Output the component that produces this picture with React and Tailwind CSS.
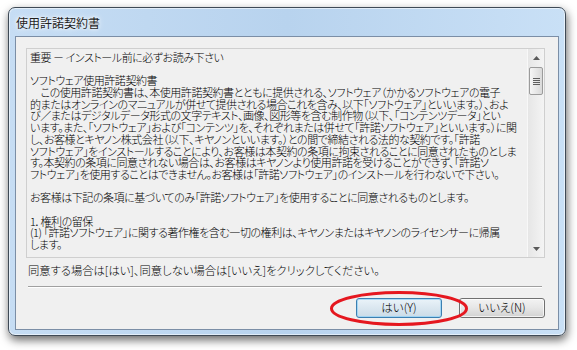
import React from "react";

const lines = [
  "重要 － インストール前に必ずお読み下さい",
  "",
  "ソフトウェア使用許諾契約書",
  "　この使用許諾契約書は、本使用許諾契約書とともに提供される、ソフトウェア（かかるソフトウェアの電子",
  "的またはオンラインのマニュアルが併せて提供される場合これを含み、以下「ソフトウェア」といいます。）、およ",
  "び／またはデジタルデータ形式の文字テキスト、画像、図形等を含む制作物（以下、「コンテンツデータ」とい",
  "います。また、「ソフトウェア」および「コンテンツ」を、それぞれまたは併せて「許諾ソフトウェア」といいます。）に関",
  "し、お客様とキヤノン株式会社（以下、キヤノンといいます。）との間で締結される法的な契約です。「許諾",
  "ソフトウェア」をインストールすることにより、お客様は本契約の条項に拘束されることに同意されたものとしま",
  "す。本契約の条項に同意されない場合は、お客様はキヤノンより使用許諾を受けることができず、「許諾ソ",
  "フトウェア」を使用することはできません。お客様は「許諾ソフトウェア」のインストールを行わないで下さい。",
  "",
  "お客様は下記の条項に基づいてのみ「許諾ソフトウェア」を使用することに同意されるものとします。",
  "",
  "1．権利の留保",
  "(1) 「許諾ソフトウェア」に関する著作権を含む一切の権利は、キヤノンまたはキヤノンのライセンサーに帰属",
  "します。",
];

function ScrollBar() {
  return (
    <div className="flex flex-col w-[17px] h-full bg-gradient-to-r from-[#e6e6e6] to-[#f4f4f4] border-l border-[#f8f8f8]">
      <div className="h-[17px] flex items-center justify-center">
        <svg width="7" height="4" viewBox="0 0 7 4">
          <path d="M3.5 0 L7 4 L0 4 Z" fill="#5a5a5a" />
        </svg>
      </div>
      <div className="mx-[1px] mt-[1px] h-[28px] rounded-[2px] border border-[#9b9b9b] bg-gradient-to-r from-[#f6f6f6] to-[#d9d9d9] flex flex-col items-center justify-center gap-[1px]">
        <div className="w-[7px] h-[1px] bg-[#5f5f5f]" />
        <div className="w-[7px] h-[1px] bg-[#5f5f5f]" />
        <div className="w-[7px] h-[1px] bg-[#5f5f5f]" />
        <div className="w-[7px] h-[1px] bg-[#5f5f5f]" />
      </div>
      <div className="flex-1" />
      <div className="h-[17px] flex items-center justify-center">
        <svg width="7" height="4" viewBox="0 0 7 4">
          <path d="M0 0 L7 0 L3.5 4 Z" fill="#5a5a5a" />
        </svg>
      </div>
    </div>
  );
}

export default function App() {
  return (
    <div className="relative w-[577px] h-[350px] bg-white overflow-hidden pt-[7px] pl-[8px] font-['Noto_Sans_CJK_JP',sans-serif] [font-feature-settings:'palt']">
      <div className="w-[558px] h-[329px] flex flex-col rounded-[7px] border border-[#3f4a56] bg-gradient-to-r from-[#c6ddf4] via-[#b8d3ee] to-[#c9e0f6] shadow-[1px_4px_10px_rgba(0,0,0,0.6),inset_0_0_0_1px_rgba(255,255,255,0.55)] px-[6px] pb-[5px]">
        <div className="h-[28px] flex items-center pl-[1px] pt-[1px] text-[12px] text-[#1e1e1e] [text-shadow:0_0_6px_#ffffff,0_0_3px_#ffffff]">
          使用許諾契約書
        </div>
        <div className="flex-1 flex flex-col bg-[#f0f0f0] border border-[#7b8ea6] pl-[10px] pr-[13px] pt-[11px]">
          <div className="h-[210px] flex border border-[#cfcfcf] bg-[#f0f0f0]">
            <div className="flex-1 pl-[3px] pt-[3px] text-[11px] leading-[11.7px] text-black font-light tracking-[-0.45px] overflow-hidden">
              {lines.map((l, i) => (
                <div key={i} className="h-[11.7px] whitespace-nowrap">
                  {l || "\u00a0"}
                </div>
              ))}
            </div>
            <ScrollBar />
          </div>
          <div className="mt-[6px] pl-[2px] text-[11.3px] leading-[12px] text-black font-light whitespace-nowrap">
            同意する場合は[はい]、同意しない場合は[いいえ]をクリックしてください。
          </div>
          <div className="mt-[10px] ml-[2px] mr-[3px] h-[2px] border-t border-[#a0a0a0] border-b border-b-white" />
          <div className="mt-[10px] flex justify-end gap-[17px]">
            <button className="w-[86px] h-[20px] rounded-[3px] border border-[#3c7fb1] bg-gradient-to-b from-[#eaf3f9] to-[#cbdbe7] text-[11.5px] font-light text-black shadow-[inset_0_0_0_1px_rgba(150,210,245,0.8)]">
              はい(Y)
            </button>
            <button className="w-[86px] h-[20px] rounded-[3px] border border-[#707070] bg-gradient-to-b from-[#f3f3f3] via-[#e6e6e6] to-[#d2d2d2] text-[11.5px] font-light text-black shadow-[inset_0_0_0_1px_rgba(255,255,255,0.7)]">
              いいえ(N)
            </button>
          </div>
        </div>
      </div>
      <svg
        className="absolute left-[329px] top-[290px]"
        width="140"
        height="37"
        viewBox="0 0 140 37"
      >
        <ellipse cx="70" cy="18.5" rx="67.5" ry="16" fill="none" stroke="#e5171f" strokeWidth="3" />
      </svg>
    </div>
  );
}
